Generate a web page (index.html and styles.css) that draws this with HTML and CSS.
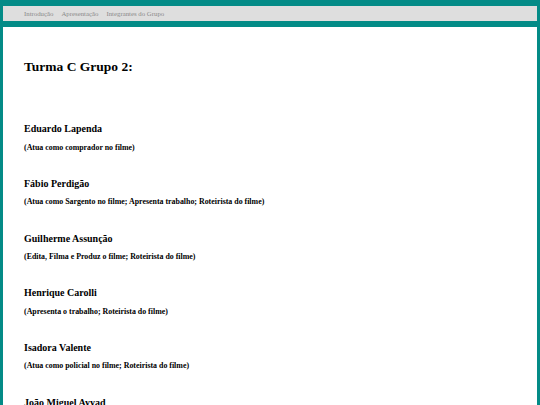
FILE: index.html
```html
<!DOCTYPE html>
<html lang="pt">
<head>
<meta charset="utf-8">
<title>Integrantes do Grupo</title>
<link rel="stylesheet" href="styles.css">
</head>
<body>
<nav class="topnav">
  <a class="navlink" href="#">Introdução</a>
  <a class="navlink" href="#">Apresentação</a>
  <a class="navlink" href="#">Integrantes do Grupo</a>
</nav>
<main class="content">
  <h2 class="title">Turma C Grupo 2:</h2>
  <section class="member">
    <h4 class="name">Eduardo Lapenda</h4>
    <h5 class="role">(Atua como comprador no filme)</h5>
  </section>
  <section class="member">
    <h4 class="name">Fábio Perdigão</h4>
    <h5 class="role">(Atua como Sargento no filme; Apresenta trabalho; Roteirista do filme)</h5>
  </section>
  <section class="member">
    <h4 class="name">Guilherme Assunção</h4>
    <h5 class="role">(Edita, Filma e Produz o filme; Roteirista do filme)</h5>
  </section>
  <section class="member">
    <h4 class="name">Henrique Carolli</h4>
    <h5 class="role">(Apresenta o trabalho; Roteirista do filme)</h5>
  </section>
  <section class="member">
    <h4 class="name">Isadora Valente</h4>
    <h5 class="role">(Atua como policial no filme; Roteirista do filme)</h5>
  </section>
  <section class="member">
    <h4 class="name">João Miguel Ayyad</h4>
    <h5 class="role">(Atua no filme; Roteirista do filme)</h5>
  </section>
</main>
</body>
</html>
```
FILE: styles.css
```css
html, body {
  margin: 0;
  height: 100%;
}
body {
  background: #038b87;
  padding: 6px 3px 0 3px;
  box-sizing: border-box;
  font-family: "Liberation Serif", "Times New Roman", serif;
  color: #000;
  overflow: hidden;
}
.topnav {
  height: 15px;
  background: #dedede;
  display: flex;
  align-items: center;
  gap: 8px;
  padding-left: 21px;
  box-sizing: border-box;
}
.navlink {
  font-size: 6.8px;
  color: #8a8a8a;
  text-decoration: none;
}
.content {
  margin-top: 6px;
  background: #fff;
  padding: 32.7px 21px 40px 21px;
  min-height: 400px;
}
.title {
  margin: 0;
  font-size: 13.5px;
  line-height: 13.5px;
  font-weight: bold;
}
.member {
  margin-top: 27.4px;
}
.member:first-of-type {
  margin-top: 51.1px;
}
.name {
  margin: 0;
  font-size: 10px;
  line-height: 10px;
  font-weight: bold;
}
.role {
  margin: 9.3px 0 0 0;
  font-size: 7.9px;
  line-height: 8px;
  font-weight: bold;
}
```
